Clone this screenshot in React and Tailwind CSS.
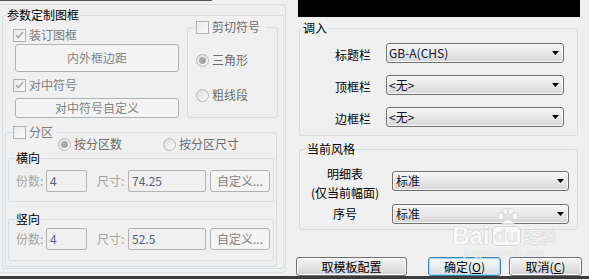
import React from 'react';

const Check = ({ checked }) => (
	<div className="w-[13px] h-[13px] shrink-0 border border-[#b1b1b1] bg-gradient-to-br from-[#e9e9e9] to-[#fbfbfb] flex items-center justify-center">
		{checked && (
			<svg width="9" height="8" viewBox="0 0 9 8">
				<path d="M1 4.2 L3.4 6.6 L8 1" fill="none" stroke="#a9a9a9" strokeWidth="1.6" />
			</svg>
		)}
	</div>
);

const Radio = ({ checked }) => (
	<div className="w-[13px] h-[13px] shrink-0 rounded-full border border-[#b6b6b6] bg-gradient-to-br from-[#dcdcdc] to-[#fbfbfb] flex items-center justify-center">
		{checked && (
			<div className="w-[7px] h-[7px] rounded-full bg-gradient-to-br from-[#c4c4c4] to-[#8e8e8e] border border-[#9a9a9a]" />
		)}
	</div>
);

const Arrow = () => (
	<svg width="7" height="4" viewBox="0 0 7 4" className="shrink-0">
		<polygon points="0,0 7,0 3.5,4" fill="#000" />
	</svg>
);

const Input = ({ value, className }) => (
	<div
		className={`h-[22px] border border-[#b4b4b4] rounded-[2px] bg-[#f0f0f0] pl-[3px] flex items-center text-[#56607a] ${className}`}
	>
		{value}
	</div>
);

// one row of 份数 / 尺寸 / 自定义
const SplitRow = ({ count, size, className }) => (
	<div className={`flex items-center pl-[7px] ${className}`}>
		<span className="w-[30px] text-[#a3a3a3]">份数:</span>
		<Input value={count} className="w-[41px]" />
		<span className="ml-[10px] w-[31px] text-[#a3a3a3]">尺寸:</span>
		<Input value={size} className="w-[78px]" />
		<div className="ml-[4px] w-[60px] h-[22px] border border-[#adb2b5] rounded-[3px] bg-[#f4f4f4] flex items-center justify-center text-[#838383]">
			自定义...
		</div>
	</div>
);

const Select = ({ value, className }) => (
	<div
		className={`h-[20px] border border-[#707070] rounded-[3px] bg-gradient-to-b from-[#f4f4f4] via-[#e9e9e9] to-[#d5d5d5] shadow-[inset_0_0_0_1px_#fafafa] flex items-center pr-[4px] text-[#12122e] ${className}`}
	>
		<span className="flex-1">{value}</span>
		<Arrow />
	</div>
);

const App = () => {
	return (
		<div className="w-[589px] h-[279px] bg-[#f0f0f0] flex flex-col overflow-hidden relative text-[12px] leading-[16px] text-black font-['Noto_Sans_CJK_SC',sans-serif]">
			<div className="flex flex-1">
				{/* left panel */}
				<div className="w-[286px] flex flex-col">
					<div className="h-px w-[212px] bg-[#555555]" />
					<div className="mt-[3px] h-[269px] border-t border-r border-b border-[#d5dfe5] rounded-tr-[4px] rounded-br-[4px]">
						<fieldset className="ml-[2px] mr-[1px] mt-[1px] border border-[#d5dfe5] rounded-[3px] pb-[1px]">
							<legend className="ml-[3px] px-px leading-[18px]">参数定制图框</legend>

							<div className="flex pl-[10px]">
								<div className="w-[166px] flex flex-col">
									<div className="mt-[3px] h-[16px] flex items-center gap-[3px] text-[#7d7d7d]">
										<Check checked />
										<span>装订图框</span>
									</div>
									<div className="ml-[2px] mt-[1px] w-[164px] h-[28px] border border-[#adb2b5] rounded-[3px] bg-[#f4f4f4] flex items-center justify-center text-[#838383]">
										内外框边距
									</div>
									<div className="mt-[5px] h-[16px] flex items-center gap-[3px] text-[#7d7d7d]">
										<Check checked />
										<span>对中符号</span>
									</div>
									<div className="ml-[2px] mt-[5px] w-[164px] h-[20px] border border-[#adb2b5] rounded-[3px] bg-[#f4f4f4] flex items-center justify-center text-[#838383]">
										对中符号自定义
									</div>
								</div>

								<fieldset className="ml-[8px] -mt-[7px] w-[91px] h-[101px] border border-[#d5dfe5] rounded-[3px]">
									<legend className="ml-[7px] pl-px pr-[6px] h-[20px] flex items-center gap-[3px] text-[#6d6d6d]">
										<Check />
										<span>剪切符号</span>
									</legend>
									<div className="pl-[8px] flex flex-col text-[#6d6d6d]">
										<div className="mt-[15px] h-[16px] flex items-center gap-[3px]">
											<Radio checked />
											<span>三角形</span>
										</div>
										<div className="mt-[19px] h-[16px] flex items-center gap-[3px]">
											<Radio />
											<span>粗线段</span>
										</div>
									</div>
								</fieldset>
							</div>

							<fieldset className="ml-[2px] mt-[6px] w-[272px] border border-[#d5dfe5] rounded-[3px] pb-[5px]">
								<legend className="ml-[6px] pl-px pr-[4px] h-[16px] flex items-center gap-[3px] text-[#7a7a7a]">
									<Check />
									<span>分区</span>
								</legend>
								<div className="-mt-[4px] h-[16px] pl-[52px] flex items-center text-[#6d6d6d]">
									<div className="flex items-center gap-[3px]">
										<Radio checked />
										<span>按分区数</span>
									</div>
									<div className="ml-[41px] flex items-center gap-[3px]">
										<Radio />
										<span>按分区尺寸</span>
									</div>
								</div>

								<fieldset className="ml-[2px] -mt-[2px] w-[266px] border border-[#d5dfe5] rounded-[3px] pb-[9px]">
									<legend className="ml-[6px] px-px leading-[16px]">横向</legend>
									<SplitRow count="4" size="74.25" className="mt-[4px]" />
								</fieldset>

								<fieldset className="ml-[2px] mt-[9px] w-[266px] border border-[#d5dfe5] rounded-[3px] pb-[10px]">
									<legend className="ml-[6px] px-px leading-[16px]">竖向</legend>
									<SplitRow count="4" size="52.5" className="mt-[1px]" />
								</fieldset>
							</fieldset>
						</fieldset>
					</div>
				</div>

				{/* right panel */}
				<div className="flex-1 flex flex-col">
					<div className="ml-[12px] w-[282px] h-[17px] bg-black" />

					<fieldset className="ml-[13px] mt-[3px] w-[279px] border border-[#d5dfe5] rounded-[3px] pb-[8px]">
						<legend className="ml-[2px] px-px leading-[16px]">调入</legend>
						<div className="flex flex-col gap-[11px] mt-[6px]">
							{[
								['标题栏', 'GB-A(CHS)'],
								['顶框栏', '<无>'],
								['边框栏', '<无>'],
							].map(([label, value]) => (
								<div key={label} className="flex items-center">
									<span className="w-[71px] text-right pt-[5px]">{label}</span>
									<Select value={value} className="ml-[15px] w-[178px] pl-[2px]" />
								</div>
							))}
						</div>
					</fieldset>

					<fieldset className="ml-[13px] mt-[5px] w-[279px] border border-[#d5dfe5] rounded-[3px] pb-[5px]">
						<legend className="ml-[6px] px-px leading-[16px]">当前风格</legend>
						<div className="mt-[7px] flex items-start">
							<div className="w-[90px] flex flex-col items-center leading-[19px]">
								<span>明细表</span>
								<span>(仅当前幅面)</span>
							</div>
							<Select value="标准" className="ml-[2px] mt-[7px] w-[177px] pl-[3px]" />
						</div>
						<div className="flex items-center">
							<span className="w-[90px] text-center leading-[19px]">序号</span>
							<Select value="标准" className="ml-[2px] mt-[2px] w-[177px] pl-[3px]" />
						</div>
					</fieldset>

					<div className="ml-[10px] mt-[27px] flex items-center">
						<div className="w-[111px] h-[19px] border border-[#707070] rounded-[3px] bg-gradient-to-b from-[#f2f2f2] via-[#e6e6e6] to-[#d2d2d2] shadow-[inset_0_0_0_1px_#fcfcfc] flex items-center justify-center">
							取模板配置
						</div>
						<div className="ml-[21px] w-[73px] h-[19px] border border-[#3c7fb1] rounded-[3px] bg-gradient-to-b from-[#f4f8fb] via-[#e8eef2] to-[#d6dde2] shadow-[inset_0_0_0_1px_#a9dcf6] flex items-center justify-center">
							<span>
								确定(<span className="underline">O</span>)
							</span>
						</div>
						<div className="ml-[8px] w-[73px] h-[19px] border border-[#707070] rounded-[3px] bg-gradient-to-b from-[#f2f2f2] via-[#e6e6e6] to-[#d2d2d2] shadow-[inset_0_0_0_1px_#fcfcfc] flex items-center justify-center">
							<span>
								取消(<span className="underline">C</span>)
							</span>
						</div>
					</div>
				</div>
			</div>
			<div className="h-[3px] bg-[#3c3c3c]" />

			{/* baidu watermark */}
			<div className="absolute left-[450px] top-[208px] w-[108px] flex flex-col items-center pointer-events-none opacity-90">
				<svg width="26" height="18" viewBox="0 0 26 18" className="ml-[8px]">
					<g fill="#fbfbfb" stroke="#d4d4d4" strokeWidth="1">
						<ellipse cx="6" cy="8" rx="3" ry="3.5" />
						<ellipse cx="10.5" cy="3.5" rx="2.8" ry="3" />
						<ellipse cx="16" cy="3.5" rx="2.8" ry="3" />
						<ellipse cx="20" cy="8" rx="3" ry="3.5" />
						<path d="M7 16 C8 10 18 10 19 16 Z" />
					</g>
				</svg>
				<div className="flex items-center h-[20px]">
					<span className="text-[24px] leading-[20px] font-bold text-[#fbfbfb] font-['Liberation_Sans',sans-serif] [text-shadow:0_0_1px_#bdbdbd,0_0_1px_#bdbdbd]">
						Bai
					</span>
					<span className="ml-[2px] px-[2px] h-[20px] rounded-[5px] border border-[#d4d4d4] bg-[#fbfbfb] text-[19px] leading-[18px] font-bold text-[#ececec] font-['Liberation_Sans',sans-serif] [text-shadow:0_0_1px_#bdbdbd]">
						du
					</span>
					<span className="ml-[3px] text-[16px] leading-[18px] text-[#fbfbfb] [text-shadow:0_0_1px_#bdbdbd,0_0_1px_#bdbdbd]">
						经验
					</span>
				</div>
				<span className="mt-[2px] text-[10px] leading-[10px] text-[#f6f6f6] font-['Liberation_Sans',sans-serif] [text-shadow:0_0_1px_#cfcfcf]">
					jingyan.baidu.com
				</span>
			</div>
		</div>
	);
};

export default App;
